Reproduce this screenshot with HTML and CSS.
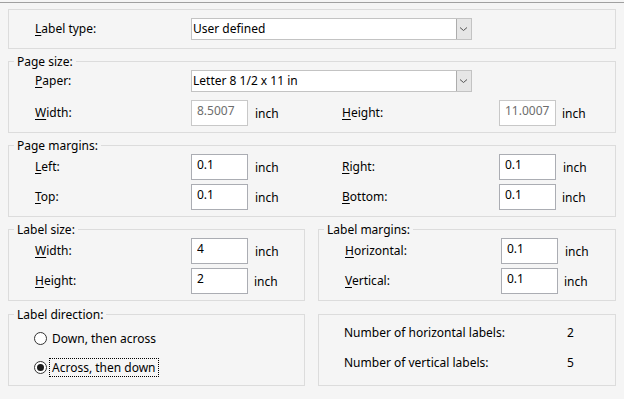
FILE: index.html
```html
<!DOCTYPE html>
<html lang="en">
<head>
  <meta charset="UTF-8" />
  <title>Label Setup</title>
  <link rel="stylesheet" href="styles.css">
</head>
<body>
  <div class="topline"></div>

  <div class="group plain">
    <div class="rows">
      <span class="lbl"><u>L</u>abel type:</span>
      <div class="combo"><span class="combo-text">User defined</span><span class="drop"><svg width="9" height="6" viewBox="0 0 9 6"><path d="M1 1.5 L4.5 4.5 L8 1.5" fill="none" stroke="#555" stroke-width="1"/></svg></span></div>
    </div>
  </div>

  <fieldset class="group">
    <legend>Page size:</legend>
    <div class="rows">
      <span class="lbl"><u>P</u>aper:</span>
      <div class="combo"><span class="combo-text">Letter 8 1/2 x 11 in</span><span class="drop"><svg width="9" height="6" viewBox="0 0 9 6"><path d="M1 1.5 L4.5 4.5 L8 1.5" fill="none" stroke="#555" stroke-width="1"/></svg></span></div>

      <span class="lbl"><u>W</u>idth:</span>
      <input class="field" type="text" value="8.5007" disabled>
      <span class="unit">inch</span>
      <span class="lbl"><u>H</u>eight:</span>
      <input class="field" type="text" value="11.0007" disabled>
      <span class="unit">inch</span>
    </div>
  </fieldset>

  <fieldset class="group">
    <legend>Page margins:</legend>
    <div class="rows">
      <span class="lbl"><u>L</u>eft:</span>
      <input class="field" type="text" value="0.1">
      <span class="unit">inch</span>
      <span class="lbl"><u>R</u>ight:</span>
      <input class="field" type="text" value="0.1">
      <span class="unit">inch</span>

      <span class="lbl"><u>T</u>op:</span>
      <input class="field" type="text" value="0.1">
      <span class="unit">inch</span>
      <span class="lbl"><u>B</u>ottom:</span>
      <input class="field" type="text" value="0.1">
      <span class="unit">inch</span>
    </div>
  </fieldset>

  <div class="pair">
    <fieldset class="group">
      <legend>Label size:</legend>
      <div class="rows half">
        <span class="lbl"><u>W</u>idth:</span>
        <input class="field" type="text" value="4">
        <span class="unit">inch</span>
        <span class="lbl"><u>H</u>eight:</span>
        <input class="field" type="text" value="2">
        <span class="unit">inch</span>
      </div>
    </fieldset>
    <fieldset class="group">
      <legend>Label margins:</legend>
      <div class="rows half">
        <span class="lbl"><u>H</u>orizontal:</span>
        <input class="field" type="text" value="0.1">
        <span class="unit">inch</span>
        <span class="lbl"><u>V</u>ertical:</span>
        <input class="field" type="text" value="0.1">
        <span class="unit">inch</span>
      </div>
    </fieldset>
  </div>

  <div class="pair pair-last">
    <fieldset class="group">
      <legend>Label direction:</legend>
      <div class="radios">
        <label class="radio-row"><span class="radio"></span><span class="radio-text">Down, then across</span></label>
        <label class="radio-row"><span class="radio checked"></span><span class="radio-text focused">Across, then down</span></label>
      </div>
    </fieldset>
    <div class="group plain info">
      <span>Number of horizontal labels:</span><span>2</span>
      <span>Number of vertical labels:</span><span>5</span>
    </div>
  </div>
</body>
</html>
```

FILE: styles.css
```css
body {
  margin: 0;
  padding: 2px 8px 0;
  background-color: #f5f5f5;
  font-family: "Segoe UI", "Noto Sans", sans-serif;
  font-size: 12px;
  color: #000;
}
.topline {
  border-top: 1px solid #a0a0a0;
  margin: 0 -8px 6px;
}
u {
  text-decoration-thickness: 1px;
  text-underline-offset: 2px;
}
.group {
  border: 1px solid #dcdcdc;
  margin: 4px 0 0;
  padding: 0 0 6px 26px;
  min-width: 0;
}
.group.plain {
  margin-top: 0;
  padding: 8px 0 8px 26px;
}
legend {
  line-height: 17px;
  padding: 0 3px;
  margin-left: -21px;
}
.rows {
  display: grid;
  grid-template-columns: 156px 57px 94px 157px 57px auto;
  row-gap: 8px;
  align-items: center;
}
.rows.half {
  grid-template-columns: 156px 57px auto;
}
fieldset:nth-of-type(2) .rows,
.rows.half {
  row-gap: 4px;
}
.lbl {
  line-height: 16px;
}
.unit {
  padding-left: 7px;
}
.rows > .unit:last-child {
  padding-left: 6px;
}
.combo {
  grid-column: 2 / -1;
  width: 281px;
  height: 22px;
  box-sizing: border-box;
  display: flex;
  background: #fff;
  border: 1px solid #c3c3c3;
}
.combo-text {
  flex: 1;
  padding-left: 1px;
  line-height: 19px;
}
.drop {
  width: 15px;
  box-sizing: border-box;
  background: #e6e6e6;
  border-left: 1px solid #adadad;
  display: flex;
  align-items: center;
  justify-content: center;
  padding-right: 2px;
}
.field {
  width: 57px;
  height: 26px;
  box-sizing: border-box;
  border: 1px solid #abadb3;
  background: #fff;
  font: inherit;
  color: #000;
  padding: 0 5px 5px;
  margin: 0;
  outline: none;
}
.field:disabled {
  color: #6d6d6d;
  border-color: #c8c8c8;
  background: #fff;
}
.pair {
  display: grid;
  grid-template-columns: 297px 1fr;
  column-gap: 13px;
  align-items: stretch;
}
.pair-last {
  margin-top: 1px;
}
.radios {
  display: flex;
  flex-direction: column;
  gap: 10px;
  padding: 6px 0 2px;
  margin-left: -1px;
}
.radio-row {
  display: flex;
  align-items: center;
  height: 19px;
}
.radio {
  width: 13px;
  height: 13px;
  box-sizing: border-box;
  border: 1px solid #333;
  border-radius: 50%;
  background: #fff;
  margin-right: 2px;
  display: flex;
  align-items: center;
  justify-content: center;
}
.radio.checked::after {
  content: "";
  width: 7px;
  height: 7px;
  border-radius: 50%;
  background: #1a1a1a;
}
.radio-text {
  border: 1px dotted transparent;
  padding: 0 2px;
  line-height: 17px;
}
.radio-text.focused {
  border-color: #000;
}
.group.plain.info {
  margin-top: 12px;
  display: grid;
  grid-template-columns: 223px auto;
  row-gap: 14px;
  align-content: start;
  padding: 10px 0 0 25px;
  line-height: 16px;
}
```
